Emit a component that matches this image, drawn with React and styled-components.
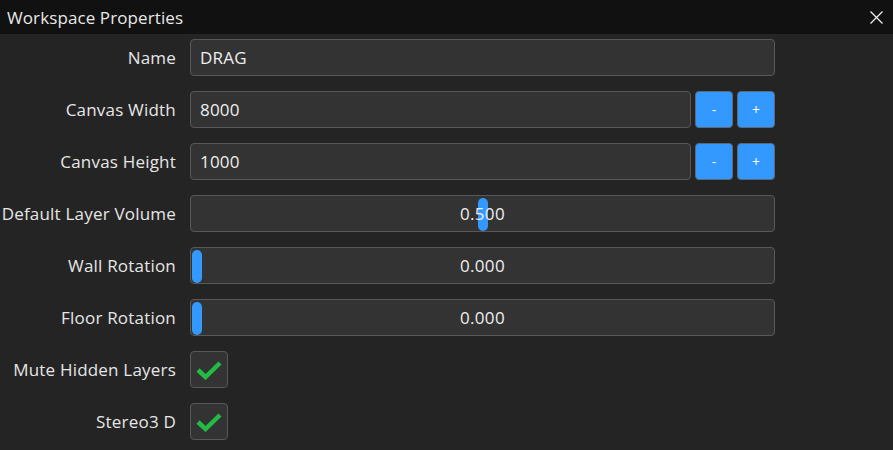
import React from "react";
import styled, { createGlobalStyle } from "styled-components";

const Global = createGlobalStyle`
  html, body { margin: 0; padding: 0; background: #242424; }
  body { font-family: "Open Sans", Lato, sans-serif; color: #e6e6e6; }
  * { box-sizing: border-box; }
`;

const Window = styled.div`
  width: 893px;
  height: 450px;
  background: #242424;
  overflow: hidden;
  display: flex;
  flex-direction: column;
`;

const TitleBar = styled.div`
  height: 34px;
  background: #111111;
  display: flex;
  align-items: center;
  justify-content: space-between;
  padding: 0 10px 0 7px;
  font-size: 17px;
  letter-spacing: 0.1px;
  color: #e8e8e8;
`;

const Close = styled.div`
  width: 14px;
  height: 14px;
  display: flex;
  align-items: center;
  justify-content: center;
`;

const Body = styled.div`
  display: grid;
  grid-template-columns: 176px 585px;
  column-gap: 14px;
  row-gap: 15px;
  padding-top: 5px;
  align-items: center;
`;

const Label = styled.div`
  text-align: right;
  font-size: 17px;
  letter-spacing: 0.2px;
  color: #e6e6e6;
  white-space: nowrap;
`;

const Field = styled.div`
  display: flex;
  gap: 4px;
  height: 37px;
`;

const Input = styled.div`
  flex: 1;
  height: 37px;
  background: #333333;
  border: 1px solid #585858;
  border-radius: 4px;
  display: flex;
  align-items: center;
  padding-left: 9px;
  font-size: 17px;
  letter-spacing: 0.2px;
  color: #eeeeee;
`;

const StepButton = styled.div`
  width: 38px;
  height: 37px;
  background: #3399ff;
  border: 1px solid #5a6a7a;
  border-radius: 4px;
  color: #ffffff;
  display: flex;
  align-items: center;
  justify-content: center;
  font-size: 14px;
`;

const Slider = styled.div`
  position: relative;
  flex: 1;
  height: 37px;
  background: #333333;
  border: 1px solid #585858;
  border-radius: 4px;
  display: flex;
  align-items: center;
  justify-content: center;
  font-size: 17px;
  letter-spacing: 0.3px;
  color: #eeeeee;
`;

const Handle = styled.div`
  position: absolute;
  top: 2px;
  width: 10px;
  height: 33px;
  border-radius: 5px;
  background: #3399ff;
`;

const ValueText = styled.span`
  position: relative;
`;

const Check = styled.div`
  width: 38px;
  height: 37px;
  background: #333333;
  border: 1px solid #585858;
  border-radius: 4px;
  display: flex;
  align-items: center;
  justify-content: center;
`;

function SliderField({ value }) {
  const left = 1 + value * (583 - 12);
  return (
    <Field>
      <Slider>
        <Handle style={{ left: `${left}px` }} />
        <ValueText>{value.toFixed(3)}</ValueText>
      </Slider>
    </Field>
  );
}

function CheckField() {
  return (
    <Field>
      <Check>
        <svg width="26" height="20" viewBox="0 0 26 20">
          <path d="M2 10 L9.5 17 L24 3" fill="none" stroke="#22bb44" strokeWidth="4.5" />
        </svg>
      </Check>
    </Field>
  );
}

export default function App() {
  return (
    <Window>
      <Global />
      <TitleBar>
        <span>Workspace Properties</span>
        <Close>
          <svg width="13" height="13" viewBox="0 0 13 13">
            <path d="M0.5 0.5 L12.5 12.5 M12.5 0.5 L0.5 12.5" stroke="#eeeeee" strokeWidth="1.3" />
          </svg>
        </Close>
      </TitleBar>
      <Body>
        <Label>Name</Label>
        <Field><Input>DRAG</Input></Field>

        <Label>Canvas Width</Label>
        <Field>
          <Input>8000</Input>
          <StepButton>-</StepButton>
          <StepButton>+</StepButton>
        </Field>

        <Label>Canvas Height</Label>
        <Field>
          <Input>1000</Input>
          <StepButton>-</StepButton>
          <StepButton>+</StepButton>
        </Field>

        <Label>Default Layer Volume</Label>
        <SliderField value={0.5} />

        <Label>Wall Rotation</Label>
        <SliderField value={0} />

        <Label>Floor Rotation</Label>
        <SliderField value={0} />

        <Label>Mute Hidden Layers</Label>
        <CheckField />

        <Label>Stereo3 D</Label>
        <CheckField />
      </Body>
    </Window>
  );
}
